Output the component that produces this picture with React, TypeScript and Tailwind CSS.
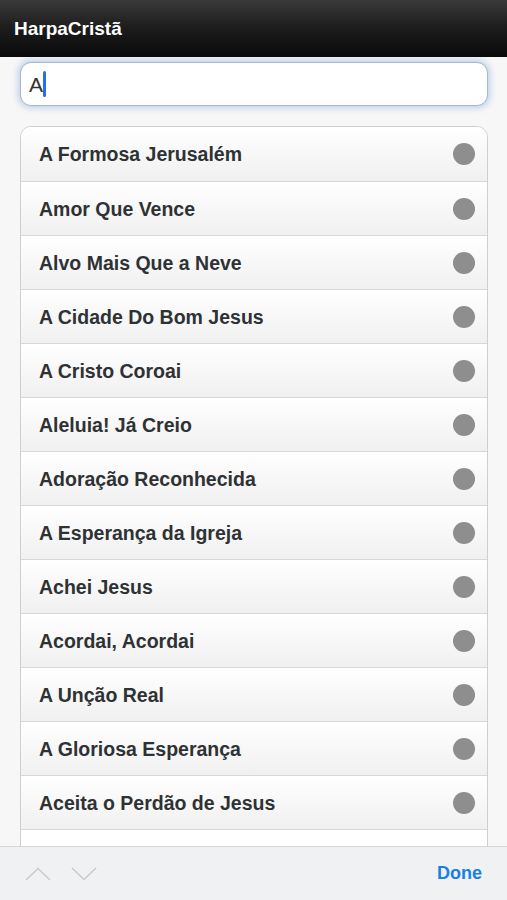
import React from "react";

const songs = [
  "A Formosa Jerusalém",
  "Amor Que Vence",
  "Alvo Mais Que a Neve",
  "A Cidade Do Bom Jesus",
  "A Cristo Coroai",
  "Aleluia! Já Creio",
  "Adoração Reconhecida",
  "A Esperança da Igreja",
  "Achei Jesus",
  "Acordai, Acordai",
  "A Unção Real",
  "A Gloriosa Esperança",
  "Aceita o Perdão de Jesus",
];

const App: React.FC = () => {
  return (
    <div className="h-[900px] w-[507px] overflow-hidden flex flex-col bg-[#f7f7f7] font-['Liberation_Sans',Arial,sans-serif]">
      {/* Header */}
      <div className="h-[57px] shrink-0 flex items-center px-[14px] bg-gradient-to-b from-[#3a3a3a] via-[#1c1c1c] to-[#0a0a0a]">
        <span className="text-white font-bold text-[19px] pt-[1px]">HarpaCristã</span>
      </div>

      {/* Content */}
      <div className="flex-1 overflow-hidden px-[20px] pt-[5px]">
        <div className="h-[44px] w-[468px] rounded-[11px] bg-white border border-[#a9b7c9] shadow-[0_0_6px_2px_rgba(120,160,220,0.45)] flex items-center pl-[8px]">
          <span className="text-[21px] text-[#333] leading-none">A</span>
          <span className="w-[3px] h-[26px] bg-[#2d6ee8] rounded-sm" />
        </div>

        <div className="mt-[20px] w-[468px] rounded-t-[11px] border border-[#cfcfcf] bg-white overflow-hidden">
          {songs.map((s, i) => (
            <div
              key={s}
              className={`h-[54px] flex items-center justify-between pl-[18px] pr-[12px] bg-gradient-to-b from-[#ffffff] to-[#f0f0f0] ${
                i > 0 ? "border-t border-[#d8d8d8]" : ""
              }`}
            >
              <span className="text-[19.5px] font-bold text-[#2e3234] pt-[2px]">{s}</span>
              <span className="w-[22px] h-[22px] rounded-full bg-[#8e8e8e]" />
            </div>
          ))}
          {/* next row, hidden under the toolbar */}
          <div className="h-[54px] border-t border-[#d8d8d8] bg-white" />
        </div>
      </div>

      {/* Keyboard toolbar */}
      <div className="h-[54px] shrink-0 border-t border-[#d4d6d8] bg-[#f0f1f3] flex items-center justify-between pl-[25px] pr-[25px]">
        <div className="flex items-center gap-[20px]">
          <svg width="26" height="14" viewBox="0 0 26 14" fill="none">
            <path d="M1 13 L13 1.5 L25 13" stroke="#c9cbce" strokeWidth="1.6" />
          </svg>
          <svg width="26" height="14" viewBox="0 0 26 14" fill="none">
            <path d="M1 1 L13 12.5 L25 1" stroke="#c9cbce" strokeWidth="1.6" />
          </svg>
        </div>
        <span className="text-[18px] font-bold text-[#1a7fe3]">Done</span>
      </div>
    </div>
  );
};

export default App;
